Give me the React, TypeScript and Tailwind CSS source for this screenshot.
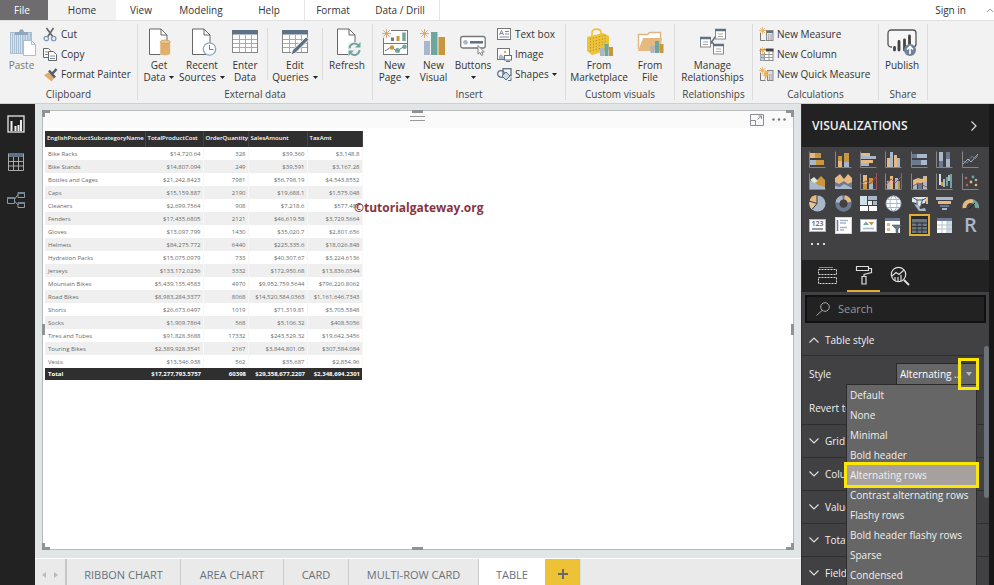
import { useState } from "react";
import type { ReactNode } from "react";

const GOLD = "#c8963c";
const SAND = "#e6b981";
const SLATE = "#6b7a90";
const MIST = "#a9b7cb";
const TEAL = "#6fa59f";

const products = [
    ["Bike Racks", "$14,720.64", "328", "$39,360", "$3,148.8"],
    ["Bike Stands", "$14,807.094", "249", "$39,591", "$3,167.28"],
    ["Bottles and Cages", "$21,242.8423", "7981", "$56,798.19", "$4,543.8552"],
    ["Caps", "$15,159.887", "2190", "$19,688.1", "$1,575.048"],
    ["Cleaners", "$2,699.7564", "908", "$7,218.6", "$577.488"],
    ["Fenders", "$17,435.6805", "2121", "$46,619.58", "$3,729.5664"],
    ["Gloves", "$13,097.799", "1430", "$35,020.7", "$2,801.656"],
    ["Helmets", "$84,275.772", "6440", "$225,335.6", "$18,026.848"],
    ["Hydration Packs", "$15,075.0979", "733", "$40,307.67", "$3,224.6136"],
    ["Jerseys", "$133,172.0236", "3332", "$172,950.68", "$13,836.0544"],
    ["Mountain Bikes", "$5,439,135.4583", "4970", "$9,952,759.5644", "$796,220.8062"],
    ["Road Bikes", "$8,983,284.3377", "8068", "$14,520,584.0363", "$1,161,646.7343"],
    ["Shorts", "$26,673.6497", "1019", "$71,319.81", "$5,705.5848"],
    ["Socks", "$1,909.7864", "568", "$5,106.32", "$408.5056"],
    ["Tires and Tubes", "$91,828.3688", "17332", "$243,529.32", "$19,642.3456"],
    ["Touring Bikes", "$2,389,928.3541", "2167", "$3,844,801.05", "$307,584.084"],
    ["Vests", "$13,346.938", "562", "$35,687", "$2,854.96"],
];

const styles = [
    "Default",
    "None",
    "Minimal",
    "Bold header",
    "Alternating rows",
    "Contrast alternating rows",
    "Flashy rows",
    "Bold header flashy rows",
    "Sparse",
    "Condensed",
];

/* ---------- ribbon ---------- */

function Big({ icon, lines, width, menu, disabled }: { icon: ReactNode; lines: string[]; width: string; menu?: boolean; disabled?: boolean }) {
    return (
        <button className={`flex flex-col items-center shrink-0 pt-1 ${width} ${disabled ? "text-[#777]" : ""}`}>
            <svg viewBox="0 0 30 30" className="w-[30px] h-[30px] mb-px" fill="none">{icon}</svg>
            {lines.map((l, i) => (
                <span key={l} className="flex items-center gap-1 leading-3 whitespace-nowrap">
                    {l}
                    {menu && i === lines.length - 1 && i > 0 && <Caret />}
                </span>
            ))}
            {menu && lines.length === 1 && <span className="flex items-center h-3"><Caret /></span>}
        </button>
    );
}

function Caret() {
    return (
        <svg viewBox="0 0 5 3" className="w-[5px] h-[3px]" fill="#222">
            <path d="M0 0h5L2.5 3z" />
        </svg>
    );
}

function Small({ icon, label, menu }: { icon: ReactNode; label: string; menu?: boolean }) {
    return (
        <button className="flex items-center gap-[3px] h-5 whitespace-nowrap">
            <svg viewBox="0 0 15 15" className="w-[15px] h-[15px] shrink-0" fill="none">{icon}</svg>
            <span>{label}</span>
            {menu && <Caret />}
        </button>
    );
}

function Group({ title, children, className = "" }: { title: string; children: ReactNode; className?: string }) {
    return (
        <section className={`flex flex-col shrink-0 border-r border-[#dcdcdc] my-[3px] ${className}`}>
            <div className="flex h-16 pr-px">{children}</div>
            <h2 className="text-center leading-3 pt-[3px] text-[#444]">{title}</h2>
        </section>
    );
}

function Divider() {
    return <div className="w-px h-[52px] mx-px mt-1 bg-[#dadada] shrink-0" />;
}

const page = (
    <>
        <path d="M5.500 1h11.500l6 6v19.500H5.500z" fill="#fff" stroke="#666" />
        <path d="M17 1v6h6" stroke="#666" />
    </>
);

const star = <path d="M4.500 0v9M0 4.500h9M1.300 1.300l6.400 6.400M7.700 1.300L1.300 7.700" stroke="#e3a95c" />;

const I = {
    paste: (
        <>
            <rect x="3" y="4" width="22" height="22" fill="#a9c0d4" />
            <path d="M4.500 5v20M6.500 5v20M8.500 5v20M10.500 5v20M12.500 5v20M14.500 5v20M17 5v7M19.500 5v7M22 5v7" stroke="#d8e3ec" />
            <path d="M8 7V4h4l1-2.500h3L17 4h4v3z" fill="#8fa7bd" />
            <path d="M16.500 12.500h8l4 4v11h-12z" fill="#fff" stroke="#a9c0d4" />
            <path d="M24.500 12.500v4h4" stroke="#a9c0d4" />
        </>
    ),
    getData: (
        <>
            {page}
            <path d="M16 14v11.500c0 2.500 10.500 2.500 10.500 0V14z" fill="#e0ae6c" stroke="#f2f2f2" strokeWidth=".6" />
            <ellipse cx="21.200" cy="13.800" rx="5" ry="1.800" fill="#ecc795" stroke="#d39a50" strokeWidth=".8" />
            <circle cx="21.500" cy="23.500" r="1" fill="#edc33a" />
        </>
    ),
    recent: (
        <>
            {page}
            <circle cx="22.500" cy="21" r="6.200" fill="#fff" stroke="#8aa5c0" strokeWidth="1.300" />
            <path d="M22.500 17v4.500h4" stroke="#6b7a90" />
        </>
    ),
    grid: (
        <>
            <rect x="2.500" y="2.500" width="25" height="22" fill="#fff" stroke="#888" />
            <rect x="2" y="2" width="26" height="4.500" fill="#5f7186" />
            <path d="M3 11.500h24M3 15.500h24M3 19.500h24M9.500 7v17M15.500 7v17M21.500 7v17" stroke="#aaa" />
        </>
    ),
    refresh: (
        <>
            {page}
            <rect x="16" y="14" width="13" height="14" fill="#f2f2f2" />
            <path d="M17.500 20.500a5 5 0 0 1 8.500-3.500M27.500 22a5 5 0 0 1-8.500 3.500" stroke={TEAL} strokeWidth="2" />
            <path d="M28.500 14v5.500H23zM16.500 28v-5.500H22z" fill={TEAL} />
        </>
    ),
    newPage: (
        <>
            <rect x="3.500" y="2.500" width="24" height="24" fill="#fff" stroke="#777" />
            <path d="M3.500 15.500h24" stroke="#777" />
            <path d="M12.500 9.500V13" stroke={SLATE} strokeWidth="3" />
            <path d="M18 8v5" stroke={GOLD} strokeWidth="3" />
            <path d="M24 4.500V13" stroke={TEAL} strokeWidth="3.500" />
            <path d="M5 23l6-4 6 4 8-5" stroke={SLATE} />
            <circle cx="12" cy="19.500" r="2.200" fill={GOLD} />
            <circle cx="17.500" cy="22.500" r="2.500" fill={TEAL} />
            <circle cx="24.500" cy="18.800" r="2.200" fill={TEAL} />
            <path d="M2 0h9v10H2z" fill="#f2f2f2" />
            <g transform="translate(2 1)">{star}</g>
        </>
    ),
    newVisual: (
        <>
            <rect x="5" y="13" width="6" height="14" fill={MIST} />
            <rect x="12" y="4" width="6.500" height="23" fill={TEAL} />
            <rect x="19.500" y="9" width="6.500" height="18" fill={GOLD} />
            <g transform="translate(1 1)">{star}</g>
        </>
    ),
    buttons: (
        <>
            <rect x="2.700" y="8.500" width="24.500" height="11.500" rx="2" fill="#fff" stroke="#777" strokeWidth="1.300" />
            <circle cx="7.500" cy="14.300" r="2.400" fill={MIST} />
            <path d="M12 14.300h13" stroke="#5f6f85" strokeWidth="2.500" />
            <path d="M20 17.500v8.500l2-1.500 1.500 3 1.500-.8-1.500-2.700h2.800z" fill="#fff" stroke="#777" strokeWidth=".9" />
        </>
    ),
    market: (
        <>
            <path d="M8 8V4.500c0-4.500 9-4.500 9 0V8" stroke="#edc33a" strokeWidth="1.600" />
            <path d="M3 9l16-4 6 3v14l-17 5-5-4z" fill="#edc33a" />
            <path d="M6 11l16-4M6 14l17-4M6 17l17-4M6 20l15-4M6 23l12-3" stroke="#a87b1c" strokeDasharray="1 2" />
            <path d="M16 20h4v8h-4z" fill={MIST} />
            <path d="M20.500 16h4v12h-4z" fill={TEAL} />
            <path d="M25 19h4v9h-4z" fill={GOLD} />
        </>
    ),
    fromFile: (
        <>
            <path d="M3.500 21V6.500h9l2-2h11v6" fill="#fff" stroke="#ddb683" strokeWidth="1.400" />
            <path d="M3 23l5-13h19l-2 13z" fill="#e6b981" />
            <path d="M15.500 18h4v7h-4z" fill={MIST} />
            <path d="M20 13h4v12h-4z" fill={TEAL} />
            <path d="M24.500 16h4v9h-4z" fill={GOLD} />
        </>
    ),
    relations: (
        <>
            <path d="M12 13.500h2l5-7M12 15h3l3 7" stroke="#5f7186" strokeWidth="1.500" />
            {[[2, 9], [17, 1], [15, 16]].map(([x, y]) => (
                <g key={x} transform={`translate(${x} ${y})`}>
                    <rect x=".5" y=".5" width="10" height="9.500" fill="#fff" stroke="#888" />
                    <path d="M0 1h11" stroke="#5f7186" strokeWidth="2.500" />
                    <path d="M3 5h5M3 7.500h5" stroke="#aaa" />
                </g>
            ))}
        </>
    ),
    publish: (
        <>
            <rect x="1" y="2" width="28" height="17" rx="3" stroke="#555" strokeWidth="1.300" fill="#f7f7f7" />
            <path d="M5 17h13v7H5z" fill="#f2f2f2" />
            <path d="M7.500 19.500V22M12 13.500V22M17.500 12v10M22.500 8v8" stroke="#444" strokeWidth="2.800" strokeLinecap="round" />
            <circle cx="23" cy="22" r="6" fill="#6f829b" />
            <path d="M23 26v-7M20 21.500l3-3 3 3" stroke="#fff" strokeWidth="1.600" />
        </>
    ),
    cut: (
        <>
            <path d="M3.500 1l6.500 9M10.500 1L4.500 10" stroke="#666" strokeWidth="1.600" />
            <circle cx="3.300" cy="11.500" r="2.200" stroke="#7d9cba" strokeWidth="1.300" />
            <circle cx="10.700" cy="11.500" r="2.200" stroke="#7d9cba" strokeWidth="1.300" />
        </>
    ),
    copy: (
        <>
            <path d="M.5 1.500h5l2 2v7h-7z" fill="#fff" stroke="#666" />
            <path d="M5.500 4.500h5l3 3v6h-8z" fill="#fff" stroke="#666" />
            <path d="M2 5h3M2 7.500h3M7 9h5M7 11.500h5" stroke="#7d8fa6" />
        </>
    ),
    painter: (
        <>
            <path d="M1 8l5.500-3 5 6-3 3.500z" fill="#e0ae6c" />
            <path d="M6 3.500l6 7M9.500 6.500L13.500 2" stroke="#555f6d" strokeWidth="2.600" />
        </>
    ),
    textBox: (
        <>
            <rect x=".5" y="1.500" width="13" height="11" fill="#fff" stroke="#777" />
            <path d="M2.500 8l2-4.500 2 4.500M3.300 6.500h2.400M8 4.500h4M8 7h4M2.500 10h9.500" stroke="#6b7a90" strokeWidth=".9" />
        </>
    ),
    image: (
        <>
            <rect x=".5" y="1.500" width="12" height="11" fill="#fff" stroke="#777" />
            <path d="M2 12V9l2-2 3 3v2z" fill={MIST} />
            <circle cx="8" cy="5" r="1.200" fill="#e3a95c" />
            <rect x="7.500" y="8.500" width="7" height="4.500" fill="#fff" stroke="#5f7186" />
            <path d="M9 14.500h4" stroke="#5f7186" />
        </>
    ),
    shapes: (
        <>
            <circle cx="4" cy="7" r="3.300" stroke="#5f7186" strokeWidth="1.300" />
            <rect x="6" y="1.700" width="8" height="7" stroke="#5f7186" strokeWidth="1.300" />
            <path d="M9 5l4 4-4 4-4-4z" fill="#cfdae6" stroke="#5f7186" />
            <path d="M11 13.500h3v-3" stroke="#5f7186" />
        </>
    ),
    measure: (
        <>
            <path d="M1.500 6v7.500h5" stroke="#777" />
            <rect x="7.500" y="3.500" width="6.500" height="10" fill="#e4e4e4" stroke="#888" />
            <path d="M8 5h6" stroke="#5f7186" strokeWidth="2" />
            <path d="M9 8h4M9 10h4M9 12h4" stroke="#888" strokeDasharray="1 .6" />
            <g transform="scale(.8)">{star}</g>
        </>
    ),
    column: (
        <>
            <rect x="1.500" y="2.500" width="12.500" height="11" fill="#fff" stroke="#888" />
            <path d="M1.500 7h4v6.500h-4z" fill="#b9cde0" />
            <path d="M7 3h7.500" stroke="#444" strokeWidth="3" />
            <path d="M2 7.500h12M2 10.500h12M5.500 5v9M10 5v9" stroke="#999" />
            <g transform="scale(.8)">{star}</g>
        </>
    ),
    quick: (
        <>
            <path d="M1.500 6v7.500h5" stroke="#777" />
            <rect x="8.500" y="3.500" width="5.500" height="10" fill="#ddd" stroke="#888" />
            <path d="M10 8h3M10 10h3M10 12h3" stroke="#888" strokeDasharray="1 .6" />
            <path d="M6 4h4L8 7h2l-5 7 1-5H4z" fill="#e9b665" />
            <g transform="scale(.8)">{star}</g>
        </>
    ),
};

function Ribbon() {
    return (
        <header className="shrink-0 border-b border-[#cfcfcf]">
            <nav className="flex h-5 bg-white">
                <button className="w-12 bg-[#6e6c6e] text-white pr-1">File</button>
                <button className="w-[68px] bg-[#f2f2f2]">Home</button>
                <button className="w-[50px]">View</button>
                <button className="w-[70px]">Modeling</button>
                <button className="w-[66px]">Help</button>
                <div className="flex border-x border-[#e4e4e4] ml-[2px]">
                    <button className="w-14">Format</button>
                    <button className="w-[78px]">Data / Drill</button>
                </div>
                <button className="ml-auto mr-5">Sign in</button>
                <button aria-label="Collapse ribbon">
                    <svg viewBox="0 0 8 6" className="w-2 h-[6px]" fill="none" stroke="#999"><path d="M1 5l3-3 3 3" /></svg>
                </button>
            </nav>
            <div className="flex h-[83px] bg-[#f2f2f2] border-t border-[#e0e0e0] overflow-hidden">
                <Group title="Clipboard" className="w-[138px]">
                    <Big icon={I.paste} lines={["Paste"]} width="w-[43px]" disabled />
                    <div>
                        <Small icon={I.cut} label="Cut" />
                        <Small icon={I.copy} label="Copy" />
                        <Small icon={I.painter} label="Format Painter" />
                    </div>
                </Group>
                <Group title="External data" className="w-[235px]">
                    <Big icon={I.getData} lines={["Get", "Data"]} width="w-[42px]" menu />
                    <Big icon={I.recent} lines={["Recent", "Sources"]} width="w-[44px]" menu />
                    <Big icon={I.grid} lines={["Enter", "Data"]} width="w-[42px]" />
                    <Divider />
                    <Big
                        icon={<>{I.grid}<path d="M11 27l1.500-5L26 9l3 2.500L15.500 25z" fill="#5f7186" stroke="#f2f2f2" /></>}
                        lines={["Edit", "Queries"]}
                        width="w-[52px]"
                        menu
                    />
                    <Divider />
                    <Big icon={I.refresh} lines={["Refresh"]} width="w-[46px]" />
                </Group>
                <Group title="Insert" className="w-[193px]">
                    <Big icon={I.newPage} lines={["New", "Page"]} width="w-[43px]" menu />
                    <Big icon={I.newVisual} lines={["New", "Visual"]} width="w-[35px]" />
                    <Big icon={I.buttons} lines={["Buttons"]} width="w-[44px]" menu />
                    <div className="pl-[2px]">
                        <Small icon={I.textBox} label="Text box" />
                        <Small icon={I.image} label="Image" />
                        <Small icon={I.shapes} label="Shapes" menu />
                    </div>
                </Group>
                <Group title="Custom visuals" className="w-[109px]">
                    <Big icon={I.market} lines={["From", "Marketplace"]} width="w-[66px]" />
                    <Big icon={I.fromFile} lines={["From", "File"]} width="w-[36px]" />
                </Group>
                <Group title="Relationships" className="w-[78px]">
                    <Big icon={I.relations} lines={["Manage", "Relationships"]} width="w-[75px]" />
                </Group>
                <Group title="Calculations" className="w-[126px]">
                    <div className="pl-[6px]">
                        <Small icon={I.measure} label="New Measure" />
                        <Small icon={I.column} label="New Column" />
                        <Small icon={I.quick} label="New Quick Measure" />
                    </div>
                </Group>
                <Group title="Share" className="w-[49px]">
                    <Big icon={I.publish} lines={["Publish"]} width="w-[46px]" />
                </Group>
            </div>
        </header>
    );
}

/* ---------- left rail ---------- */

function Rail() {
    return (
        <nav className="w-[35px] shrink-0 bg-[#222] flex flex-col items-center gap-5 pt-[11px] pr-[3px]">
            <button aria-label="Report">
                <svg viewBox="0 0 18 18" className="w-[18px] h-[18px]" fill="none">
                    <rect x="1" y="1" width="16" height="16" stroke="#e8e8e8" strokeWidth="1.300" />
                    <path d="M4.500 6v10M8.500 11v5M11.500 10v6M14 5v11" stroke="#eee" strokeWidth="2" />
                </svg>
            </button>
            <button aria-label="Data">
                <svg viewBox="0 0 18 18" className="w-[18px] h-[18px]" fill="none">
                    <rect x="1" y="0" width="16" height="4" fill="#5f7186" />
                    <path d="M1.500 1v16.500h15V1M1 8.500h16M1 13h16M6.500 4v13M11.500 4v13" stroke="#aaa" />
                </svg>
            </button>
            <button aria-label="Model">
                <svg viewBox="0 0 18 18" className="w-[18px] h-[18px]" fill="none" stroke="#999">
                    <path d="M.5 6.500h7v6h-7zM11 1.500h6.500v5H11zM11 11.500h6.500v5H11zM7.500 8.500l3.500-5M7.500 10l3.500 4" />
                    <path d="M0 7h8M11 2h7M11 12h7" stroke="#6f86a0" strokeWidth="2" />
                </svg>
            </button>
        </nav>
    );
}

/* ---------- report canvas ---------- */

const handle = "absolute bg-[#909396]";

function Canvas() {
    return (
        <div className="flex-1 min-h-0 bg-[#e2e5e5] pt-[6px] px-[7px] pb-2 flex">
            <div className="relative flex-1 min-w-0 bg-white border border-[#b9bbbb]">
                <div className="h-[17px] bg-[#fafafa] flex items-center justify-end gap-2 pr-[7px]">
                    <button aria-label="Focus mode">
                        <svg viewBox="0 0 14 12" className="w-[14px] h-3" fill="none" stroke="#8a8d92">
                            <path d="M.5.5h13v11H.5zM.5 6.500h5v5M7.500 5.500l4-3.500M8.500 2h3v3" />
                        </svg>
                    </button>
                    <button aria-label="More options">
                        <svg viewBox="0 0 14 3" className="w-[14px] h-[3px]" fill="#777">
                            <circle cx="1.500" cy="1.500" r="1.200" /><circle cx="7" cy="1.500" r="1.200" /><circle cx="12.500" cy="1.500" r="1.200" />
                        </svg>
                    </button>
                </div>
                <div className="absolute left-1/2 top-[5px] w-[15px] h-[5px] -ml-2 border-y border-[#999]" />
                <div className="px-[2px] pt-[3px]">
                    <table className="w-[317px] table-fixed border-collapse text-[6px] leading-[7px] text-[#6a6a6a] whitespace-nowrap">
                        <colgroup>
                            <col className="w-[100px]" />
                            <col className="w-[58px]" />
                            <col className="w-[45px]" />
                            <col className="w-[59px]" />
                            <col className="w-[55px]" />
                        </colgroup>
                        <thead>
                            <tr className="h-4 bg-[#2f2f2f] text-white text-left">
                                {["EnglishProductSubcategoryName", "TotalProductCost", "OrderQuantity", "SalesAmount", "TaxAmt"].map((h) => (
                                    <th key={h} className="p-0 pl-[2px] pb-[2px] font-semibold border-r border-[#444]">{h}</th>
                                ))}
                            </tr>
                        </thead>
                        <tbody>
                            {products.map((row) => (
                                <tr key={row[0]} className="h-[13px] even:bg-[#efefef]">
                                    {row.map((cell, i) => (
                                        <td key={i} className={i === 0 ? "p-0 pl-[3px] pt-px" : "p-0 pr-[2px] pt-px text-right border-r border-[#f7f7f7]"}>{cell}</td>
                                    ))}
                                </tr>
                            ))}
                        </tbody>
                        <tfoot>
                            <tr className="h-3 bg-[#2f2f2f] text-white text-right font-bold">
                                <td className="p-0 pl-[3px] text-left">Total</td>
                                <td className="p-0 pr-[2px]">$17,277,793.5757</td>
                                <td className="p-0 pr-[2px]">60398</td>
                                <td className="p-0 pr-[2px]">$29,358,677.2207</td>
                                <td className="p-0 pr-[2px]">$2,348,694.2301</td>
                            </tr>
                        </tfoot>
                    </table>
                </div>
                <p className="absolute left-[311px] top-[89px] text-xs leading-4 font-bold text-[#873440]">©tutorialgateway.org</p>

                <i className="absolute -left-px -top-px w-2 h-[7px] border-l-[3px] border-t-[3px] border-[#909396]" />
                <i className="absolute -right-px -top-px w-2 h-[7px] border-r-[3px] border-t-[3px] border-[#909396]" />
                <i className="absolute -left-px -bottom-px w-2 h-[7px] border-l-[3px] border-b-[3px] border-[#909396]" />
                <i className="absolute -right-px -bottom-px w-2 h-[7px] border-r-[3px] border-b-[3px] border-[#909396]" />
                <i className={`${handle} left-1/2 -ml-[6px] -top-px w-[11px] h-[3px]`} />
                <i className={`${handle} left-1/2 -ml-[6px] -bottom-px w-[11px] h-[3px]`} />
                <i className={`${handle} top-1/2 -mt-[6px] -left-px w-[3px] h-[11px]`} />
                <i className={`${handle} top-1/2 -mt-[6px] -right-px w-[3px] h-[11px]`} />
            </div>
        </div>
    );
}

function PageTabs() {
    const tab = "h-full border-r border-[#cbcbcb] pt-[6px]";
    return (
        <nav className="flex h-[27px] shrink-0 bg-[#eaeaea] border-t border-white text-[11px] text-[#68717c]">
            <div className="flex items-center justify-center gap-2 w-8 pt-[6px] border-r-2 border-[#c8c4c4]">
                <button aria-label="Previous page">
                    <svg viewBox="0 0 4 6" className="w-1 h-[6px]" fill="#bbb"><path d="M4 0v6L0 3z" /></svg>
                </button>
                <button aria-label="Next page">
                    <svg viewBox="0 0 4 6" className="w-1 h-[6px]" fill="#bbb"><path d="M0 0v6l4-3z" /></svg>
                </button>
            </div>
            <button className={`${tab} w-[114px]`}>RIBBON CHART</button>
            <button className={`${tab} w-[103px]`}>AREA CHART</button>
            <button className={`${tab} w-[65px]`}>CARD</button>
            <button className={`${tab} w-[130px]`}>MULTI-ROW CARD</button>
            <button className="w-[66px] pt-[6px] bg-white">TABLE</button>
            <button className="w-9 pt-1 bg-[#edc236] flex items-center justify-center border-r border-[#ddd]" aria-label="New page">
                <svg viewBox="0 0 10 10" className="w-[10px] h-[10px]" stroke="#68696b" strokeWidth="2"><path d="M5 0v10M0 5h10" /></svg>
            </button>
        </nav>
    );
}

/* ---------- visualizations pane ---------- */

const axis = <path d="M.5.5v16h16" stroke="#858585" fill="none" />;

// [x, y, w, h, fill]
type Bar = [number, number, number, number, string];
const bars = (list: Bar[], withAxis = true) => (
    <>
        {withAxis && axis}
        {list.map(([x, y, w, h, f], i) => <rect key={i} x={x} y={y} width={w} height={h} fill={f} />)}
    </>
);

const visuals: [string, ReactNode][] = [
    ["Stacked bar chart", bars([[1, 2, 5, 5, SAND], [6, 2, 6, 5, GOLD], [1, 9, 6, 5, MIST], [7, 9, 8, 5, GOLD]])],
    ["Stacked column chart", bars([[3, 5, 4, 5, GOLD], [3, 10, 4, 6, SAND], [9, 2, 5, 9, GOLD], [9, 11, 5, 5, MIST]])],
    ["Clustered bar chart", bars([[1, 2, 9, 3, SAND], [1, 5, 15, 3, MIST], [1, 9, 12, 3, SAND], [1, 12, 8, 3, MIST]])],
    ["Clustered column chart", bars([[2, 7, 3, 9, SAND], [5, 1, 3, 15, MIST], [9, 4, 3, 12, SAND], [12, 7, 3, 9, MIST]])],
    ["100% stacked bar chart", bars([[1, 3, 5, 4, SLATE], [6, 3, 10, 4, MIST], [1, 9, 9, 5, SLATE], [10, 9, 6, 5, MIST]])],
    ["100% stacked column chart", bars([[3, 1, 4, 9, MIST], [3, 10, 4, 6, SLATE], [10, 1, 4, 7, SLATE], [10, 8, 4, 8, MIST]])],
    ["Line chart", <>{axis}<path d="M1 13l5-5 3 3 7-8" stroke={MIST} /><path d="M1 10l4 2 5-7 3 3 3-3" stroke={SLATE} /></>],
    ["Area chart", <>{axis}<path d="M1 16V9l6-1 5-5 4 4v9z" fill={GOLD} /><path d="M1 16V8l5 1 3 3 7 2v2z" fill={MIST} /><path d="M1 7l4-3 4 4-4 2z" fill="#e5e5e0" /></>],
    ["Stacked area chart", <><path d="M0 16V5l5-4 4 5 4-5 4 4v11z" fill={SAND} /><path d="M0 16V9l4 2 5-3 4 3 4-2v7z" fill={SLATE} /><path d="M0 16v-3l5 1 4-3 8 4v1z" fill={MIST} /></>],
    ["Line and stacked column chart", <>{bars([[3, 2, 4, 9, SAND], [3, 11, 4, 5, GOLD], [9, 5, 4, 6, GOLD], [9, 11, 4, 5, MIST]])}<path d="M1 11l5-3 4 3 6-7M16.500 0v16" stroke="#a8545c" /></>],
    ["Line and clustered column chart", <>{bars([[2, 8, 3, 8, MIST], [5, 3, 3, 13, SAND], [10, 5, 3, 11, MIST], [13, 8, 2, 8, GOLD]])}<path d="M1 12l5-6 4 4 6-6M16.500 0v16" stroke="#a8545c" /></>],
    ["Ribbon chart", <>{bars([[2, 8, 4, 8, MIST], [7, 6, 4, 10, SLATE], [12, 3, 4, 13, MIST]])}<path d="M2 7l5-2 4 1 5-3v5l-6 2-8 2z" fill={SAND} /><path d="M2 13l5-3 9 4" stroke="#a8545c" /></>],
    ["Waterfall chart", bars([[3, 1, 2, 11, "#d7e0ea"], [5, 9, 2, 4, GOLD], [7, 6, 2, 8, MIST], [10, 4, 2, 9, TEAL], [12, 2, 2, 6, MIST], [14, 1, 2, 14, TEAL]])],
    ["Scatter chart", <>{axis}<g fill={SAND}><circle cx="9" cy="9" r="1.400" /><circle cx="14" cy="12" r="1.300" /></g><g fill="#c15f5f"><circle cx="4" cy="5" r="1.300" /><circle cx="5" cy="12" r="1.200" /></g><g fill={TEAL}><circle cx="11" cy="4" r="1.400" /></g><circle cx="14" cy="7" r="1.300" fill={MIST} /></>],
    ["Pie chart", <><circle cx="8.500" cy="8.500" r="8" fill={MIST} /><path d="M8 8V0a8 8 0 0 0-7.500 6z" fill={SAND} /><path d="M8 8.500L.5 6.500a8 8 0 0 0 2.500 8z" fill="#e4c49c" /><path d="M8 0v8.500l-5 6M8 8.500L0 6" stroke="#3c3c3d" /></>],
    ["Donut chart", <><circle cx="8.500" cy="8.500" r="6.200" stroke={SLATE} strokeWidth="4" /><path d="M9.500 2.300A6.200 6.200 0 0 1 14.500 7" stroke={SAND} strokeWidth="4" /><path d="M2.500 7.500a6.200 6.200 0 0 1 5-5" stroke={MIST} strokeWidth="4" /></>],
    ["Treemap", bars([[0, 1, 7, 9, "#cfe0e6"], [8, 1, 9, 4, MIST], [8, 6, 4, 4, "#e8eef2"], [13, 6, 4, 4, MIST], [0, 11, 8, 5, "#fff"], [9, 11, 8, 5, "#fff"]], false)],
    ["Map", <><circle cx="8.500" cy="8.500" r="7.500" fill="#fff" stroke={MIST} /><ellipse cx="8.500" cy="8.500" rx="3.500" ry="7.500" stroke={MIST} /><path d="M1 8.500h15M2.500 4.500h12M2.500 12.500h12" stroke={MIST} /></>],
    ["Filled map", <><path d="M1 2h15l-2 6-4 1-1 3-4-4-4-1z" fill="#dfe6ea" /><path d="M1 2l5 3h5l5-2M6 5v5M10 9l2-5" stroke="#4a5563" /><path d="M3 9l5 1 1 4 5-1 1 3H8z" fill={MIST} /><path d="M15 2h2v7h-2z" fill={SAND} /></>],
    ["Funnel", bars([[0, 2, 17, 3, MIST], [2, 6, 13, 3, SAND], [4, 10, 9, 2, SLATE], [6, 13, 5, 2, MIST]], false)],
    ["Gauge", <><path d="M2.500 13a6.200 6.200 0 0 1 9-6.200" stroke={SAND} strokeWidth="4" /><path d="M11 6.500a6.200 6.200 0 0 1 4 6.500" stroke={TEAL} strokeWidth="4" /><path d="M7 14l6-6" stroke="#222" /></>],
    ["Card", <><rect x=".5" y="2.500" width="16" height="12" fill="#fff" stroke={MIST} /><text x="8.500" y="9" textAnchor="middle" fontSize="7" fontWeight="700" fill={SLATE}>123</text><path d="M3 12h11" stroke={SLATE} strokeWidth="1.500" /></>],
    ["Multi-row card", <><rect x=".5" y=".5" width="16" height="16" fill="#fff" stroke="#ccd5de" /><path d="M2.500 3v11" stroke={SLATE} strokeWidth="1.500" /><path d="M5 3.500h8M5 6h6M5 10.500h7M5 13h4" stroke={MIST} strokeWidth="1.500" /></>],
    ["KPI", <><rect x=".5" y="2.500" width="16" height="12" fill="#fff" stroke={MIST} /><path d="M3 8l3-3.500L9 8z" fill={TEAL} /><path d="M8.500 5H14l-2.500 3.500z" fill={GOLD} /><path d="M3 11.500h11" stroke={MIST} strokeWidth="1.500" /></>],
    ["Slicer", <><path d="M0 1h15v15H0z" fill="#fff" /><path d="M0 1h15v3H0z" fill={SLATE} /><path d="M2 6h3v3H2zM2 11h3v3H2z" fill={SAND} /><path d="M7 8h10l-4 4v5l-2-1.500V12z" fill={SLATE} stroke="#404042" strokeWidth=".5" /></>],
    ["Table", <><path d="M1 2h15v14H1z" fill="#68778a" /><path d="M1 6h15M1 9.500h15M1 13h15M6 5v11M11 5v11" stroke="#333" /></>],
    ["Matrix", <><path d="M1 1h15v15H1z" fill="#fff" /><path d="M1 1h15v3H1z" fill={SLATE} /><path d="M11 4h5v12h-5z" fill="#c9dbe3" /><path d="M1 8h15M1 12h15M6 4v12M11 4v12" stroke="#b8c5d0" /></>],
];

function Chevron({ up }: { up?: boolean }) {
    return (
        <svg viewBox="0 0 10 6" className="w-[10px] h-[6px] shrink-0" fill="none" stroke="#ddd" strokeWidth="1.200">
            <path d={up ? "M.5 5.500L5 1l4.500 4.500" : "M.5.5L5 5 9.500.5"} />
        </svg>
    );
}

function StylePicker() {
    const [value, setValue] = useState("Alternating rows");

    return (
        <div className="relative flex items-center justify-between h-9 pl-[7px] pr-3">
            <label htmlFor="table-style">Style</label>
            <div className="relative z-20">
                <select
                    id="table-style"
                    value={value}
                    onChange={(e) => setValue(e.target.value)}
                    className="appearance-none block w-[81px] h-[22px] pl-[3px] pr-[14px] bg-[#666] border border-[#2a2a2a] text-ellipsis text-white"
                >
                    {styles.map((s) => <option key={s}>{s}</option>)}
                </select>
                <span className="absolute -top-[5px] -right-[2px] w-[21px] h-8 border-[3px] border-[#fbe60a] flex items-center justify-center pointer-events-none">
                    <svg viewBox="0 0 6 4" className="w-[6px] h-1" fill="#b7bdc6"><path d="M0 0h6L3 4z" /></svg>
                </span>
            </div>
            <ul role="listbox" aria-label="Style" className="absolute z-10 right-3 top-7 w-[131px] bg-[#666] border border-[#2c2c2c]">
                {styles.map((s) => (
                    <li key={s} role="option" aria-selected={s === value} className="relative h-5">
                        <button onClick={() => setValue(s)} className={`block w-full h-5 pl-[3px] text-left whitespace-nowrap ${s === value ? "bg-[#a6a19f]" : ""}`}>
                            {s}
                        </button>
                        {s === value && <i className="absolute -inset-[3px] border-[3px] border-[#fbe60a] pointer-events-none" />}
                    </li>
                ))}
            </ul>
        </div>
    );
}

function Pane() {
    return (
        <aside className="w-[193px] shrink-0 bg-[#171717] pr-[5px] flex text-[#f0f0f0]">
            <div className="flex-1 min-w-0 bg-[#414143] flex flex-col border-l border-[#333]">
                <div className="flex items-center justify-between h-[43px] shrink-0 bg-[#222] pl-[10px] pr-3">
                    <h2 className="text-xs font-semibold">VISUALIZATIONS</h2>
                    <button aria-label="Collapse pane">
                        <svg viewBox="0 0 6 10" className="w-[6px] h-[10px]" fill="none" stroke="#ddd" strokeWidth="1.200"><path d="M.5.5L5 5 .5 9.500" /></svg>
                    </button>
                </div>
                <div className="h-[113px] shrink-0 pt-px pl-[3px] pr-[6px]">
                    <div className="grid grid-cols-7">
                        {visuals.map(([name, icon]) => (
                            <button
                                key={name}
                                aria-label={name}
                                className={`flex items-center justify-center justify-self-center w-[21px] h-[22px] ${name === "Table" ? "bg-[#2a2a2a] border-2 border-[#e3ae35]" : ""}`}
                            >
                                <svg viewBox="0 0 17 17" className="w-[17px] h-[17px] shrink-0" fill="none">{icon}</svg>
                            </button>
                        ))}
                        <button className="justify-self-center h-[22px] text-xl leading-[22px] font-semibold text-[#a9b7cb]">R</button>
                    </div>
                    <button className="block ml-[6px] mt-1" aria-label="More visuals">
                        <svg viewBox="0 0 14 8" className="w-[14px] h-2" fill="#ddd"><path d="M0 3h2v2H0zM6 3h2v2H6zM12 3h2v2h-2z" /></svg>
                    </button>
                </div>
                <div className="flex h-8 shrink-0 bg-[#222] pl-[9px] gap-[3px]">
                    <button aria-label="Fields" className="w-[33px] flex items-center justify-center">
                        <svg viewBox="0 0 20 18" className="w-5 h-[18px]" fill="none" stroke="#ddd">
                            <path d="M1 .5h14" stroke="#888" />
                            <path d="M.5 2.500h18v5H.5zM.5 10.500h18v6H.5z" strokeDasharray="2 1" />
                        </svg>
                    </button>
                    <button aria-label="Format" className="w-[33px] flex items-center justify-center border-b-2 border-[#e3ae35]">
                        <svg viewBox="0 0 18 20" className="w-[18px] h-5" fill="none" stroke="#ddd" strokeWidth="1.200">
                            <path d="M1.500 1.500h12v4h-12zM13.500 3.500h3v4l-7.500 2v2M7 11.500h4v7.500H7z" />
                        </svg>
                    </button>
                    <button aria-label="Analytics" className="w-[33px] flex items-center justify-center">
                        <svg viewBox="0 0 20 20" className="w-5 h-5" fill="none" stroke="#ddd" strokeWidth="1.200">
                            <circle cx="8.500" cy="8.500" r="7.200" />
                            <path d="M14 14l5 5" strokeWidth="2" />
                            <path d="M2 10l4-3.500 3 2L14 4M5 15v-4M8 15v-4M11 15V9" />
                        </svg>
                    </button>
                </div>
                <div className="px-[3px] pt-[3px] shrink-0">
                    <label className="flex items-center gap-2 h-7 pl-[9px] bg-[#222] border-2 border-[#111]">
                        <svg viewBox="0 0 14 14" className="w-[14px] h-[14px] shrink-0" fill="none" stroke="#aaa"><circle cx="9" cy="5" r="4.300" /><path d="M6 8.500l-5.500 5" /></svg>
                        <input type="search" aria-label="Search" placeholder="Search" className="min-w-0 flex-1 bg-transparent outline-none text-[11px] placeholder:text-[#999]" />
                    </label>
                </div>
                <div className="relative flex-1 min-h-0">
                    <button className="flex items-center gap-[6px] w-full h-[33px] pl-[7px] pt-[2px] border-b border-[#2e2e2f]"><Chevron up />Table style</button>
                    <StylePicker />
                    <div className="flex items-center h-[33px] pl-[7px] border-b border-[#2e2e2f]">Revert to default</div>
                    {["Grid", "Column headers", "Values", "Total", "Field formatting"].map((s) => (
                        <button key={s} className="flex items-center gap-[6px] w-full h-[33px] pl-[7px] border-b border-[#2e2e2f] whitespace-nowrap"><Chevron />{s}</button>
                    ))}
                    <div className="absolute right-0 top-[23px] w-[5px] h-[152px] rounded-full bg-[#6c7079]" />
                </div>
            </div>
        </aside>
    );
}

export default function App() {
    return (
        <div className="flex flex-col h-screen overflow-hidden bg-[#eaeaea] font-['Open_Sans',sans-serif] text-[10px] text-[#333]">
            <Ribbon />
            <div className="flex flex-1 min-h-0">
                <Rail />
                <main className="flex flex-col flex-1 min-w-0">
                    <Canvas />
                    <PageTabs />
                </main>
                <Pane />
            </div>
        </div>
    );
}
